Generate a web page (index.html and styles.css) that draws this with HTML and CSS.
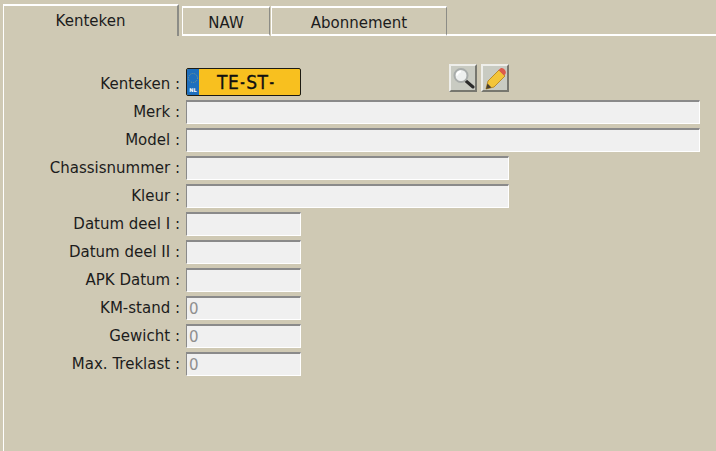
FILE: index.html
```html
<!DOCTYPE html>
<html lang="en">
<head>
    <meta charset="UTF-8">
    <title>Kenteken</title>
    <link rel="stylesheet" href="styles.css">
</head>
<body>
    <div class="tabs">
        <div class="tab active">Kenteken</div>
        <div class="tab naw">NAW</div>
        <div class="tab abo">Abonnement</div>
        <div class="tab-rest"></div>
    </div>
    <div class="panel">
        <div class="row">
            <label>Kenteken :</label>
            <div class="plate">
                <div class="plate-eu">
                    <svg width="12" height="26" viewBox="0 0 12 26">
                        <circle cx="6" cy="9" r="4.5" fill="none" stroke="#7f9a8c" stroke-width="1" stroke-dasharray="1 1"/>
                        <text x="6" y="23" class="plate-nl">NL</text>
                    </svg>
                </div>
                <div class="plate-text">TE<span class="plate-dash">-</span>ST<span class="plate-dash">-</span></div>
            </div>
            <div class="tool-btn first">
                <svg width="24" height="24" viewBox="0 0 24 24">
                    <path d="M15 15 L22 21" stroke="#2a2a2a" stroke-width="3" stroke-linecap="round"/>
                    <circle cx="10" cy="9.5" r="6.5" fill="#eef0ef" stroke="#a8acaa" stroke-width="2"/>
                    <path d="M6 9.5 a4 4 0 0 1 4 -4" stroke="#fff" stroke-width="2" fill="none"/>
                </svg>
            </div>
            <div class="tool-btn">
                <svg width="24" height="24" viewBox="0 0 24 24">
                    <path d="M3 23 L5 15 L16 4 L22 10 L11 21 Z" fill="#f3c53a" stroke="#bb8d2a" stroke-width="1"/>
                    <path d="M3 23 L4.5 17.5 L8.5 21.5 Z" fill="#4a4030"/>
                    <path d="M15.5 4 L18 2 Q20 1.5 22 4 Q23.5 6 22.5 8 L21 9.5 Z" fill="#dc5a4c"/>
                </svg>
            </div>
        </div>
        <div class="row"><label>Merk :</label><input class="wide" type="text"></div>
        <div class="row"><label>Model :</label><input class="wide" type="text"></div>
        <div class="row"><label>Chassisnummer :</label><input class="medium" type="text"></div>
        <div class="row"><label>Kleur :</label><input class="medium" type="text"></div>
        <div class="row"><label>Datum deel I :</label><input class="short" type="text"></div>
        <div class="row"><label>Datum deel II :</label><input class="short" type="text"></div>
        <div class="row"><label>APK Datum :</label><input class="short" type="text"></div>
        <div class="row"><label>KM-stand :</label><input class="short" type="text" placeholder="0"></div>
        <div class="row"><label>Gewicht :</label><input class="short" type="text" placeholder="0"></div>
        <div class="row"><label>Max. Treklast :</label><input class="short" type="text" placeholder="0"></div>
    </div>
</body>
</html>
```

FILE: styles.css
```css
html, body {
    height: 100%;
}
body {
    margin: 0;
    padding: 4px 0 0 3px;
    box-sizing: border-box;
    background-color: #cfc9b4;
    font-family: 'DejaVu Sans', sans-serif;
    font-size: 15px;
    color: #1c1c1c;
    overflow: hidden;
}
.tabs {
    display: flex;
    align-items: flex-end;
    height: 32px;
}
.tab {
    box-sizing: border-box;
    text-align: center;
    border-top: 2px solid #fff;
    border-left: 1px solid #fff;
    border-right: 1px solid #8c8c86;
    border-bottom: 2px solid #fff;
    height: 30px;
    line-height: 30px;
}
.tab.active {
    width: 176px;
    height: 32px;
    line-height: 31px;
    border-right-width: 2px;
    border-bottom: none;
    margin-right: 3px;
}
.tab.naw {
    width: 88px;
    margin-right: 1px;
}
.tab.abo {
    width: 176px;
}
.tab-rest {
    flex: 1;
    border-bottom: 2px solid #fff;
}
.panel {
    box-sizing: border-box;
    height: 415px;
    border-left: 1px solid #fff;
    padding-top: 32px;
}
.row {
    display: flex;
    align-items: flex-end;
    height: 28px;
}
label {
    width: 177px;
    margin-left: -1px;
    margin-right: 6px;
    text-align: right;
    line-height: 24px;
    flex: none;
}
input {
    box-sizing: border-box;
    height: 24px;
    padding: 0 2px;
    background-color: #f0f0f0;
    border-style: solid;
    border-width: 2px 1px 1px 1px;
    border-color: #8a8a8a #fff #fff #8a8a8a;
    font-family: inherit;
    font-size: 15px;
    border-radius: 0;
    outline: none;
}
input::placeholder {
    color: #8f8f8f;
    opacity: 1;
}
.wide {
    width: 514px;
}
.medium {
    width: 323px;
}
.short {
    width: 115px;
}
.plate {
    box-sizing: border-box;
    display: flex;
    width: 115px;
    height: 28px;
    background-color: #f8c01f;
    border: 1px solid #1c1a12;
    border-radius: 2px;
    overflow: hidden;
}
.plate-eu {
    width: 12px;
    background-color: #1f6fbd;
    flex: none;
}
.plate-nl {
    font-size: 5px;
    font-weight: bold;
    fill: #fff;
    text-anchor: middle;
}
.plate-text {
    padding-left: 18px;
    font-family: 'DejaVu Sans Condensed', 'DejaVu Sans', sans-serif;
    font-stretch: condensed;
    font-size: 19px;
    line-height: 27px;
    letter-spacing: 0.5px;
    color: #111;
    -webkit-text-stroke: 0.3px #111;
}
.plate-dash {
    font-size: 12px;
    font-weight: bold;
    vertical-align: 2px;
    margin: 0 1px;
}
.tool-btn {
    box-sizing: border-box;
    width: 28px;
    height: 28px;
    margin-bottom: 4px;
    margin-left: 4px;
    background-color: #c9cbc2;
    border-style: solid;
    border-width: 2px;
    border-color: #eeeeea #77776f #77776f #eeeeea;
    display: flex;
    align-items: center;
    justify-content: center;
}
.tool-btn.first {
    margin-left: 148px;
}
```
